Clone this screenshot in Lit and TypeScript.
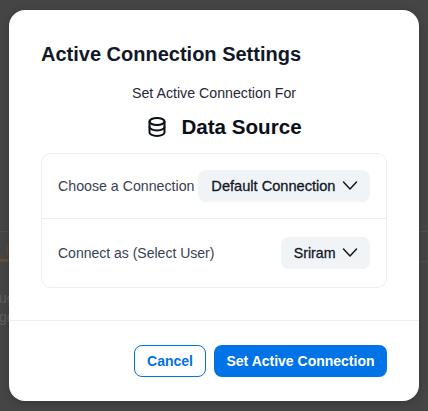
import { LitElement, html, css } from "lit";
import { customElement } from "lit/decorators.js";

const chevron = html`<svg class="chev" width="16" height="16" viewBox="0 0 16 16" fill="none" stroke="#111827" stroke-width="1.5" stroke-linecap="round" stroke-linejoin="round"><path d="M1.5 4 8 11 14.5 4"/></svg>`;

@customElement("app-root")
export class AppRoot extends LitElement {
  static styles = css`
    :host { display: block; width: 428px; height: 411px; overflow: hidden; position: relative; background: #454545; font-family: "Liberation Sans", Arial, sans-serif; }
    .backdrop { position: absolute; inset: 0; overflow: hidden; }
    .bd-line { position: absolute; left: 0; right: 0; height: 1px; background: #505050; }
    .l1 { top: 231px; }
    .l2 { top: 261px; }
    .bd-tab { position: absolute; left: 0; width: 10px; height: 2px; background: #6b5127; top: 259px; }
    .bd-p { position: absolute; left: 5px; top: 242px; color: #5f4f33; font-size: 14px; }
    .bd-text { position: absolute; left: -1px; color: #5e5e5e; font-size: 14px; }
    .t1 { top: 290px; }
    .t2 { top: 309px; }
    .modal { position: absolute; left: 9px; top: 10px; width: 410px; height: 391px; box-sizing: border-box; background: #fff; border-radius: 16px; display: flex; flex-direction: column; box-shadow: 0 2px 8px rgba(0,0,0,.2); }
    .body { padding: 30px 32px 0; flex: 1; display: flex; flex-direction: column; }
    h1 { margin: 0; font-size: 20px; line-height: 28px; font-weight: 700; color: #111827; }
    .sub { margin-top: 15px; text-align: center; font-size: 14.2px; line-height: 20px; color: #1f2937; }
    .src { margin-top: 10px; padding-left: 22px; display: flex; justify-content: center; align-items: center; gap: 15px; font-size: 20.6px; line-height: 28px; font-weight: 700; color: #0b0f17; }
    .card { margin-top: 12px; border: 1px solid #eceef1; border-radius: 10px; display: flex; flex-direction: column; }
    .row { height: 64px; padding: 0 16px; display: flex; align-items: center; justify-content: space-between; font-size: 14.2px; color: #374151; }
    .row + .row { border-top: 1px solid #eceef1; height: 68px; font-size: 14px; }
    .sel { height: 32px; padding: 0 12px 0 13px; display: flex; align-items: center; gap: 6.5px; background: #f1f4f7; border-radius: 8px; color: #111827; font-size: 14.5px; -webkit-text-stroke: 0.3px #111827; }
    .sel.wide { font-size: 14.6px; }
    .sel.narrow { font-size: 14.2px; }
    .foot { height: 81px; box-sizing: border-box; border-top: 1px solid #eceef1; display: flex; justify-content: flex-end; align-items: flex-start; gap: 8px; padding: 24px 32px 0; }
    button { height: 32px; box-sizing: border-box; border-radius: 8px; font: 700 14px "Liberation Sans", Arial, sans-serif; padding: 0; }
    .cancel { width: 72px; background: #fff; border: 1px solid #0073e6; color: #0073e6; }
    .ok { width: 173px; background: #0073e6; border: none; color: #fff; }
  `;
  render() {
    return html`
      <div class="backdrop">
        <div class="bd-line l1"></div><div class="bd-line l2"></div><div class="bd-tab"></div>
        <div class="bd-p">P</div>
        <div class="bd-text t1">ug</div>
        <div class="bd-text t2">ge</div>
      </div>
      <div class="modal">
        <div class="body">
          <h1>Active Connection Settings</h1>
          <div class="sub">Set Active Connection For</div>
          <div class="src">
            <svg width="18" height="20" viewBox="0 0 18 20" fill="none" stroke="#0b0f17" stroke-width="2" stroke-linecap="round" stroke-linejoin="round">
              <ellipse cx="9" cy="4.5" rx="7.5" ry="3.5"/><path d="M1.5 4.5v11c0 1.9 3.4 3.5 7.5 3.5s7.5-1.6 7.5-3.5v-11"/><path d="M1.5 10c0 1.9 3.4 3.5 7.5 3.5s7.5-1.6 7.5-3.5"/>
            </svg>
            <span>Data Source</span>
          </div>
          <div class="card">
            <div class="row"><span>Choose a Connection</span><div class="sel wide">Default Connection ${chevron}</div></div>
            <div class="row"><span>Connect as (Select User)</span><div class="sel narrow">Sriram ${chevron}</div></div>
          </div>
        </div>
        <div class="foot"><button class="cancel">Cancel</button><button class="ok">Set Active Connection</button></div>
      </div>`;
  }
}
